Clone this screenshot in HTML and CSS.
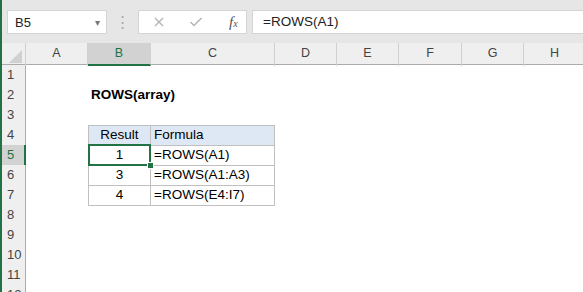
FILE: index.html
```html
<!DOCTYPE html>
<html lang="en">
<head>
    <meta charset="UTF-8">
    <title>ROWS function</title>
    <link rel="stylesheet" href="styles.css">
</head>
<body>
    <div class="window">
        <!-- Formula bar -->
        <div class="formula-bar">
            <div class="name-box">
                <span>B5</span>
                <span class="drop">&#9662;</span>
            </div>
            <div class="grip">&#8942;</div>
            <div class="fx-buttons">
                <svg class="btn-icon" width="12" height="12" viewBox="0 0 12 12">
                    <path d="M2 2 L10 10 M10 2 L2 10" stroke="#b4b4b4" stroke-width="1.4" fill="none"/>
                </svg>
                <svg class="btn-icon" width="14" height="12" viewBox="0 0 14 12">
                    <path d="M1.5 6 L5 9.5 L12.5 2" stroke="#b4b4b4" stroke-width="1.5" fill="none"/>
                </svg>
                <span class="fx">f<small>x</small></span>
            </div>
            <div class="formula-input">=ROWS(A1)</div>
        </div>

        <!-- Sheet -->
        <div class="sheet">
            <div class="row col-heads">
                <div class="corner"><span class="corner-tri"></span></div>
                <div class="col-head">A</div>
                <div class="col-head active">B</div>
                <div class="col-head">C</div>
                <div class="col-head">D</div>
                <div class="col-head">E</div>
                <div class="col-head">F</div>
                <div class="col-head">G</div>
                <div class="col-head">H</div>
            </div>
            <div class="row"><div class="row-head">1</div><div></div><div></div><div></div></div>
            <div class="row"><div class="row-head">2</div><div></div><div class="cell title">ROWS(array)</div><div></div></div>
            <div class="row"><div class="row-head">3</div><div></div><div></div><div></div></div>
            <div class="row">
                <div class="row-head">4</div><div></div>
                <div class="cell tbl first top head center">Result</div>
                <div class="cell tbl top head">Formula</div>
            </div>
            <div class="row">
                <div class="row-head active">5</div><div></div>
                <div class="cell tbl first center selected">1</div>
                <div class="cell tbl">=ROWS(A1)</div>
            </div>
            <div class="row">
                <div class="row-head">6</div><div></div>
                <div class="cell tbl first center">3</div>
                <div class="cell tbl">=ROWS(A1:A3)</div>
            </div>
            <div class="row">
                <div class="row-head">7</div><div></div>
                <div class="cell tbl first center">4</div>
                <div class="cell tbl">=ROWS(E4:I7)</div>
            </div>
            <div class="row"><div class="row-head">8</div></div>
            <div class="row"><div class="row-head">9</div></div>
            <div class="row"><div class="row-head">10</div></div>
            <div class="row"><div class="row-head">11</div></div>
            <div class="row"><div class="row-head">12</div></div>
        </div>
    </div>
</body>
</html>
```

FILE: styles.css
```css
body {
    margin: 0;
    font-family: "Liberation Sans", Arial, sans-serif;
    background: #fff;
    overflow: hidden;
}
.window {
    border-left: 2px solid #217346;
    height: 292px;
    box-sizing: border-box;
}
.formula-bar {
    display: flex;
    align-items: flex-start;
    height: 43px;
    box-sizing: border-box;
    padding: 10px 0 0 5px;
    background: #e6e6e6;
}
.name-box {
    display: flex;
    justify-content: space-between;
    align-items: center;
    width: 100px;
    height: 24px;
    box-sizing: border-box;
    padding: 0 6px 0 7px;
    background: #fff;
    border: 1px solid #d4d4d4;
    font-size: 13px;
    color: #222;
}
.drop {
    font-size: 10px;
    color: #777;
}
.grip {
    width: 31px;
    text-align: center;
    color: #a6a6a6;
    font-size: 15px;
    line-height: 24px;
}
.fx-buttons {
    display: flex;
    align-items: center;
    width: 109px;
    height: 24px;
    box-sizing: border-box;
    padding: 0 0 0 14px;
    background: #fff;
    border: 1px solid #d4d4d4;
}
.btn-icon {
    margin-right: 24px;
}
.fx {
    margin-left: 2px;
    font-family: "Liberation Serif", serif;
    font-style: italic;
    font-size: 15px;
    color: #555;
}
.fx small {
    font-size: 10px;
}
.formula-input {
    flex: 1;
    height: 24px;
    box-sizing: border-box;
    margin-left: 5px;
    padding-left: 10px;
    background: #fff;
    border: 1px solid #d4d4d4;
    border-right: 0;
    font-size: 13.5px;
    line-height: 22px;
    color: #222;
}
.sheet {
    font-size: 13.5px;
    color: #000;
}
.row {
    display: grid;
    grid-template-columns: 24px 62px 63px 124px 62px 62px 63px 62px 62px;
    height: 20px;
}
.col-heads {
    height: 21px;
    background: #efefef;
    border-bottom: 1px solid #ababab;
}
.corner {
    position: relative;
    border-right: 1px solid #d0d0d0;
}
.corner-tri {
    position: absolute;
    right: 3px;
    bottom: 3px;
    border-style: solid;
    border-width: 0 0 13px 13px;
    border-color: transparent transparent #d0d0d0 transparent;
}
.col-head {
    text-align: center;
    font-size: 12.5px;
    line-height: 21px;
    color: #444;
    border-right: 1px solid #d0d0d0;
    box-sizing: border-box;
}
.col-head.active {
    background: #d2d2d2;
    border-bottom: 2px solid #217346;
    color: #217346;
}
.row-head {
    box-sizing: border-box;
    padding-left: 5px;
    font-size: 13px;
    line-height: 20px;
    color: #444;
    background: #efefef;
    border-right: 1px solid #ababab;
    border-bottom: 1px solid #d7d7d7;
}
.row-head.active {
    background: #d2d2d2;
    border-right: 2px solid #217346;
    color: #217346;
}
.cell {
    box-sizing: border-box;
    padding: 0 3px;
    line-height: 19px;
    white-space: nowrap;
}
.title {
    font-weight: bold;
}
.tbl {
    border-right: 1px solid #c0c0c0;
    border-bottom: 1px solid #c0c0c0;
}
.tbl.first {
    border-left: 1px solid #c0c0c0;
}
.tbl.top {
    border-top: 1px solid #c0c0c0;
    line-height: 18px;
}
.head {
    background: #dde8f4;
}
.center {
    text-align: center;
}
.selected {
    position: relative;
}
.selected::after {
    content: "";
    position: absolute;
    left: -1px;
    top: -1px;
    right: -1px;
    bottom: -1px;
    border: 2px solid #217346;
}
.selected::before {
    content: "";
    position: absolute;
    right: -4px;
    bottom: -4px;
    width: 5px;
    height: 5px;
    background: #217346;
    border: 1px solid #fff;
    z-index: 1;
}
```
